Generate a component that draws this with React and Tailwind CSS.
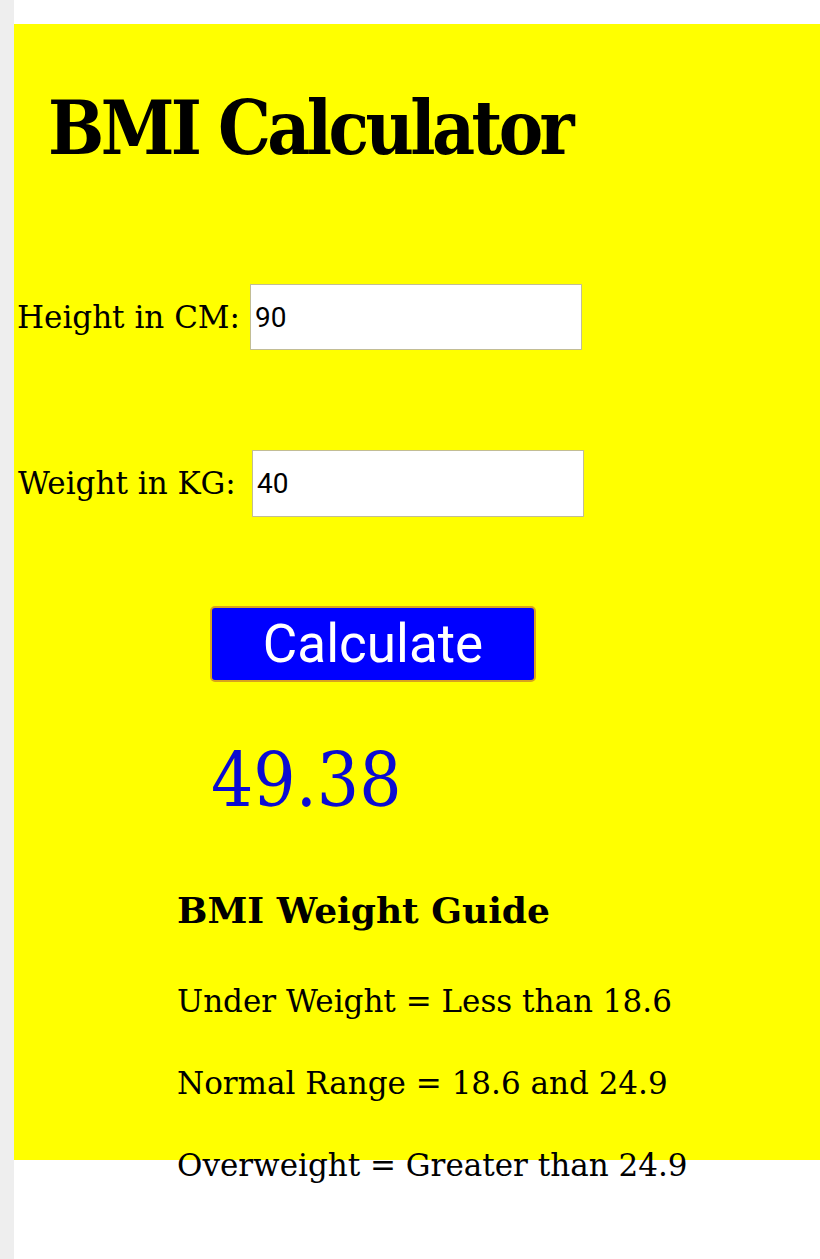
import { useState } from 'react'

const serif = 'font-["DejaVu_Serif",serif]'

const App = () => {
  const [height, setHeight] = useState('90')
  const [weight, setWeight] = useState('40')

  return (
    <div className="flex min-h-[1259px] bg-white">
      <div className="w-[14px] shrink-0 bg-[#eeeeee]"></div>
      <div className="flex-1 pt-[24px]">
        <div className={`h-[1136px] bg-[#ffff00] text-black ${serif}`}>
          <div className="pt-[67px] pl-[34px]">
            <h1 className="text-[74px] leading-none font-bold font-stretch-condensed tracking-[-3.6px]">BMI Calculator</h1>
          </div>

          {/* Height */}
          <div className="mt-[119px] flex h-[66px] items-center">
            <label className="w-[236px] pl-[3px] text-[31px] leading-none">Height in CM:</label>
            <input
              type="text"
              value={height}
              onChange={(e) => setHeight(e.target.value)}
              className='h-[66px] w-[332px] border border-[#c2bd95] bg-white pl-[4px] font-["Roboto",sans-serif] text-[28px] text-black outline-none'
            />
          </div>

          {/* Weight */}
          <div className="mt-[100px] flex h-[67px] items-center">
            <label className="w-[238px] pl-[4px] text-[31px] leading-none">Weight in KG:</label>
            <input
              type="text"
              value={weight}
              onChange={(e) => setWeight(e.target.value)}
              className='h-[67px] w-[332px] border border-[#c2bd95] bg-white pl-[4px] font-["Roboto",sans-serif] text-[28px] text-black outline-none'
            />
          </div>

          <div className="mt-[89px] pl-[196px]">
            <button
              type="button"
              className='flex h-[76px] w-[326px] items-center justify-center rounded-[5px] border-2 border-[#d8a31c] bg-[#0000ff] font-["Roboto",sans-serif] text-[53px] leading-none text-white'
            >
              Calculate
            </button>
          </div>

          <div className="mt-[61px] pl-[197px] text-[74px] leading-none font-stretch-condensed text-[#0b0bd2]">49.38</div>

          <div className="mt-[75px] pl-[163px]">
            <h3 className="text-[36px] leading-none font-bold">BMI Weight Guide</h3>
            <p className="mt-[58px] text-[31px] leading-none">Under Weight = Less than 18.6</p>
            <p className="mt-[51px] text-[31px] leading-none">Normal Range = 18.6 and 24.9</p>
            <p className="mt-[51px] text-[31px] leading-none">Overweight = Greater than 24.9</p>
          </div>
        </div>
      </div>
    </div>
  )
}

export default App
